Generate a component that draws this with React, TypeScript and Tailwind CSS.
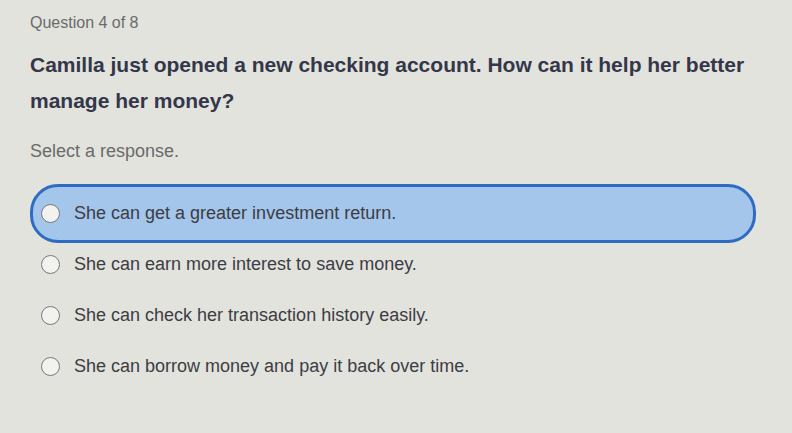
export default function App() {
  const options = [
    "She can get a greater investment return.",
    "She can earn more interest to save money.",
    "She can check her transaction history easily.",
    "She can borrow money and pay it back over time.",
  ];
  const selected = 0;

  return (
    <div
      className="h-[433px] w-[792px] overflow-hidden bg-[#e3e3dd] pl-[30px] pr-[36px] pt-[12px]"
      style={{ fontFamily: '"Liberation Sans", Arial, sans-serif' }}
    >
      <p className="text-[16px] leading-[22px] text-[#6a6a6c]">Question 4 of 8</p>

      <h1 className="mt-[13px] pr-[10px] text-[21px] font-bold leading-[36px] text-[#34364a]">
        Camilla just opened a new checking account. How can it help her better manage her money?
      </h1>

      <p className="mt-[21px] text-[18px] leading-[22px] text-[#6a6a6c]">Select a response.</p>

      <div className="mt-[26px] flex flex-col">
        {options.map((opt, i) => (
          <div
            key={opt}
            className={
              i === selected
                ? "-my-[4px] flex h-[59px] items-center gap-[14px] rounded-[28px] border-[3px] border-[#2e6cc4] bg-[#a4c6ea] pl-[8px]"
                : "flex h-[51px] items-center gap-[14px] rounded-[28px] pl-[11px]"
            }
          >
            <span className="h-[19px] w-[19px] shrink-0 rounded-full border-[1.5px] border-[#77787c] bg-[#f2f2ef]" />
            <span className="text-[18px] text-[#3c3d44]">{opt}</span>
          </div>
        ))}
      </div>
    </div>
  );
}
